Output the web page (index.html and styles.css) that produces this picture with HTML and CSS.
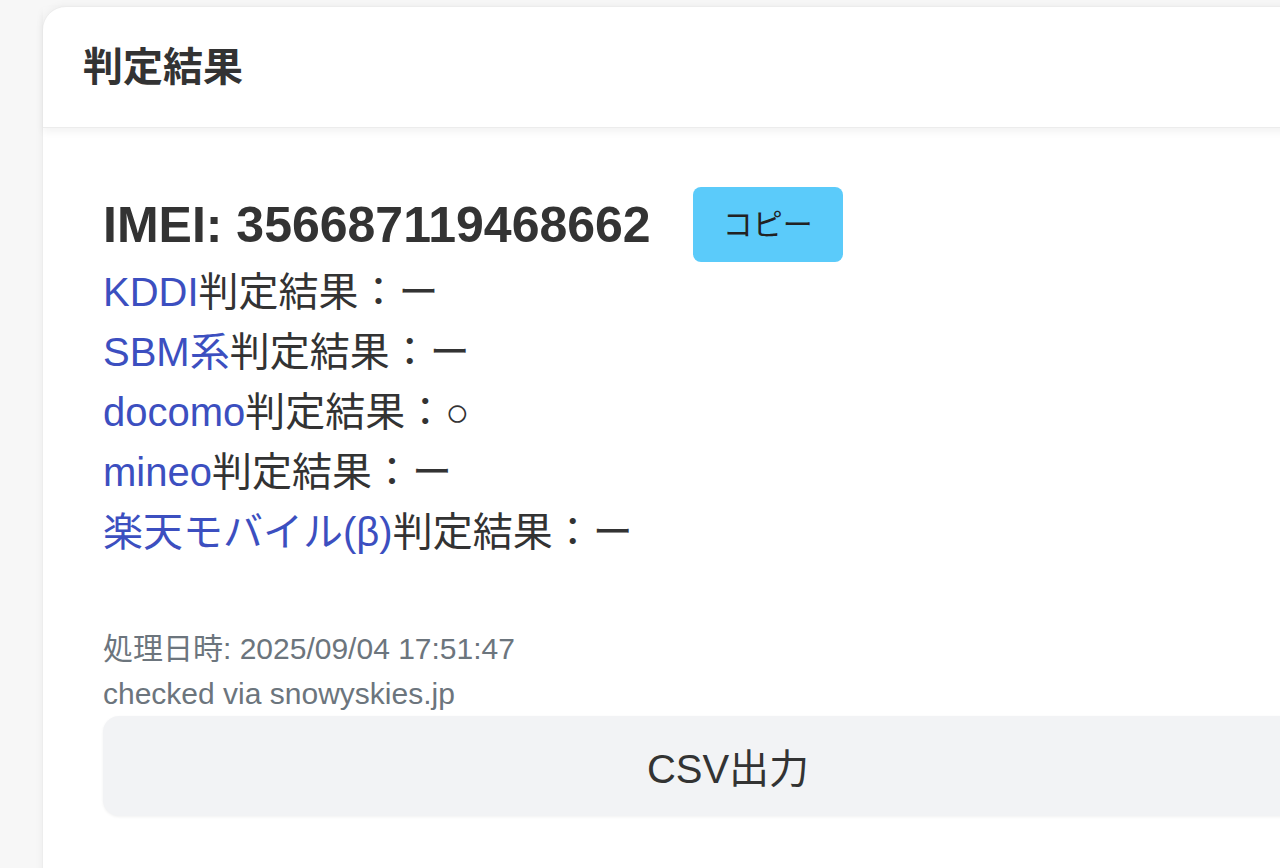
FILE: index.html
```html
<!DOCTYPE html>
<html lang="ja">
<head>
    <meta charset="UTF-8">
    <meta name="viewport" content="width=device-width, initial-scale=1">
    <title>判定結果</title>
    <link rel="stylesheet" href="styles.css">
</head>
<body>
    <div class="page">
        <div class="card">
            <div class="card-header">判定結果</div>
            <div class="card-body">
                <div class="imei-row">
                    <h2 class="imei">IMEI: 356687119468662</h2>
                    <button class="copy-btn" onclick="copyImei()">コピー</button>
                </div>
                <ul class="results">
                    <li><a href="#">KDDI</a>判定結果：ー</li>
                    <li><a href="#">SBM系</a>判定結果：ー</li>
                    <li><a href="#">docomo</a>判定結果：○</li>
                    <li><a href="#">mineo</a>判定結果：ー</li>
                    <li><a href="#">楽天モバイル(β)</a>判定結果：ー</li>
                </ul>
                <div class="meta">処理日時: 2025/09/04 17:51:47</div>
                <div class="meta">checked via snowyskies.jp</div>
                <button class="csv-btn">CSV出力</button>
            </div>
        </div>
    </div>

    <script>
        // Copy the IMEI number to the clipboard
        function copyImei() {
            const text = document.querySelector('.imei').textContent.replace('IMEI: ', '');
            if (navigator.clipboard) {
                navigator.clipboard.writeText(text);
            }
        }
    </script>
</body>
</html>
```

FILE: styles.css
```css
* {
    box-sizing: border-box;
}

/* Body */
body {
    margin: 0;
    background-color: #f7f7f7;
    font-family: 'Liberation Sans', 'Noto Sans CJK JP', sans-serif;
    color: #333;
    overflow: hidden;
}

.page {
    padding: 6px 0 0 42px;
}

/* Card */
.card {
    width: 1372px;
    min-height: 900px;
    background-color: #ffffff;
    border: 1px solid #ededed;
    border-radius: 24px;
    box-shadow: 0 0 8px rgba(0, 0, 0, 0.05);
}

.card-header {
    padding: 30px 40px;
    font-size: 40px;
    font-weight: bold;
    line-height: 60px;
    color: #333;
    border-bottom: 1px solid #ececec;
    box-shadow: 0 4px 8px rgba(0, 0, 0, 0.05);
}

.card-body {
    padding: 59px 60px 60px;
}

/* IMEI row */
.imei-row {
    display: flex;
    align-items: center;
    gap: 42px;
}

.imei {
    margin: 0;
    font-size: 50px;
    font-weight: bold;
    line-height: 60px;
    color: #333;
}

.copy-btn {
    padding: 15px 30px;
    border: none;
    border-radius: 8px;
    background-color: #5bcbfa;
    color: #222;
    font-family: inherit;
    font-size: 30px;
    line-height: 45px;
    cursor: pointer;
}

/* Results list */
.results {
    list-style-type: none;
    margin: 0 0 64px;
    padding: 0;
}

.results li {
    font-size: 40px;
    line-height: 60px;
    color: #333;
}

.results a {
    color: #3c4fc0;
    text-decoration: none;
}

/* Meta text */
.meta {
    font-size: 30px;
    line-height: 45px;
    color: #6c757d;
}

/* CSV button */
.csv-btn {
    display: block;
    width: 1250px;
    height: 100px;
    border: none;
    border-radius: 16px;
    background-color: #f2f3f5;
    box-shadow: 0 1px 3px rgba(0, 0, 0, 0.06);
    color: #333;
    font-family: inherit;
    font-size: 40px;
    cursor: pointer;
}
```
